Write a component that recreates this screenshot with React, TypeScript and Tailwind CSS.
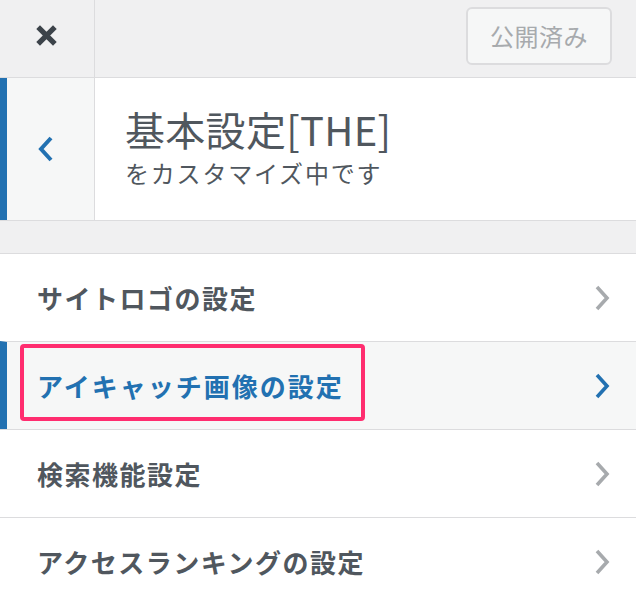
import React from "react";

const Chevron = ({ dir, color, className }: { dir: "left" | "right"; color: string; className?: string }) => (
  <svg className={className} viewBox="0 0 16 28" fill="none">
    {dir === "right" ? (
      <path d="M3 3 L13 14 L3 25" stroke={color} strokeWidth="3.6" strokeLinecap="butt" strokeLinejoin="miter" />
    ) : (
      <path d="M13 3 L3 14 L13 25" stroke={color} strokeWidth="4" strokeLinecap="butt" strokeLinejoin="miter" />
    )}
  </svg>
);

const items = [
  { label: "サイトロゴの設定", active: false },
  { label: "アイキャッチ画像の設定", active: true },
  { label: "検索機能設定", active: false },
  { label: "アクセスランキングの設定", active: false },
];

export default function App() {
  return (
    <div className="w-[636px] h-[600px] overflow-hidden bg-white font-['Noto_Sans_CJK_JP','Noto_Sans',sans-serif]">
      {/* Top bar */}
      <div className="flex h-[78px] bg-[#f0f0f1] border-b border-[#dcdcde]">
        <div className="w-[95px] h-full border-r border-[#dcdcde] flex items-center justify-center pb-[6px] pr-[1px]">
          <svg width="23" height="23" viewBox="0 0 22 22">
            <path d="M3 3 L19 19 M19 3 L3 19" stroke="#3c434a" strokeWidth="5" strokeLinecap="butt" />
          </svg>
        </div>
        <div className="flex-1 flex items-start justify-end pt-[7px] pr-[24px]">
          <div className="w-[146px] h-[58px] rounded-[6px] border-2 border-[#dcdcde] bg-[#f6f7f7] flex items-center justify-center text-[24px] leading-none text-[#a7aaad] tracking-[0.5px]">
            公開済み
          </div>
        </div>
      </div>

      {/* Header */}
      <div className="flex h-[143px] bg-white border-b border-[#dcdcde]">
        <div className="w-[95px] h-full bg-[#f6f7f7] border-l-[7px] border-l-[#2271b1] border-r border-r-[#dcdcde] flex items-center pl-[31px]">
          <Chevron dir="left" color="#2271b1" className="w-[16px] h-[28px]" />
        </div>
        <div className="flex-1 flex flex-col justify-center pl-[30px] pb-[4px]">
          <div className="text-[40px] leading-[46px] text-[#50575e] font-normal tracking-[0.3px]">基本設定[THE]</div>
          <div className="text-[24px] leading-[30px] text-[#50575e] mt-[6px] tracking-[1.8px]">をカスタマイズ中です</div>
        </div>
      </div>

      {/* Gap */}
      <div className="h-[32px] bg-[#f0f0f1]" />

      {/* List */}
      <div className="flex flex-col">
        {items.map((it) => (
          <div
            key={it.label}
            className={
              it.active
                ? "relative h-[88px] border-t border-[#dcdcde] bg-[#f6f7f7] border-l-[7px] border-l-[#2271b1] flex items-center pl-[30px] pr-[26px]"
                : "relative h-[88px] border-t border-[#dcdcde] bg-white flex items-center pl-[37px] pr-[26px]"
            }
          >
            <span
              className={
                it.active
                  ? "flex-1 text-[26px] font-bold leading-none text-[#2271b1] tracking-[2px]"
                  : "flex-1 text-[26px] font-bold leading-none text-[#50575e] tracking-[1.5px]"
              }
            >
              {it.label}
            </span>
            <Chevron dir="right" color={it.active ? "#2271b1" : "#a7aaad"} className="w-[16px] h-[28px]" />
            {it.active && (
              <div className="absolute left-[13px] top-[2px] w-[345px] h-[77px] border-4 border-[#ff2d6f] rounded-[4px] pointer-events-none" />
            )}
          </div>
        ))}
      </div>
    </div>
  );
}
